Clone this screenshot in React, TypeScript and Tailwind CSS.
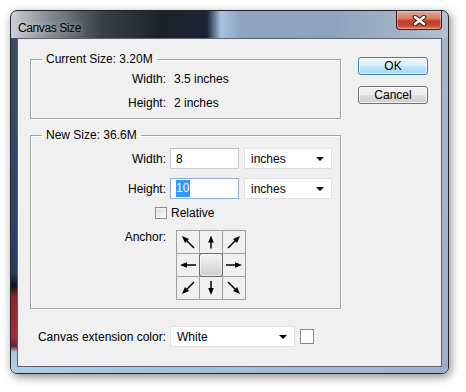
import React from 'react';

function CloseButton() {
  return (
    <div className="mr-[6px] w-[46px] h-[19px] rounded-b-[4px] border border-t-0 border-[#4a1810] bg-[linear-gradient(to_bottom,#e6a896_0%,#d8806a_40%,#c0402c_55%,#c6472e_80%,#e0785a_100%)] shadow-[inset_0_0_0_1px_rgba(255,255,255,0.35)] flex items-center justify-center">
      <svg width="15" height="11" viewBox="0 0 15 11">
        <path d="M3 2 L12 9 M12 2 L3 9" stroke="#3a1a14" strokeWidth="4.6" strokeLinecap="round" />
        <path d="M3 2 L12 9 M12 2 L3 9" stroke="#ffffff" strokeWidth="2.6" strokeLinecap="round" />
      </svg>
    </div>
  );
}

function Arrow({ rotate, len }: { rotate: number; len: number }) {
  const tip = 11 - len / 2;
  const tail = 11 + len / 2;
  return (
    <svg width="22" height="22" viewBox="0 0 22 22">
      <g transform={`rotate(${rotate} 11 11)`}>
        <line x1="11" y1={tail} x2="11" y2={tip + 5} stroke="#000" strokeWidth="1.5" />
        <polygon points={`11,${tip} 8.2,${tip + 7} 13.8,${tip + 7}`} fill="#000" />
      </g>
    </svg>
  );
}

function Select({ value, width }: { value: string; width: string }) {
  return (
    <div className={`${width} h-[21px] bg-white border border-[#e1e1e1] flex items-center justify-between pl-[6px] pr-[7px]`}>
      <span>{value}</span>
      <svg width="8" height="4" viewBox="0 0 8 4">
        <polygon points="0,0 8,0 4,4" fill="#000" />
      </svg>
    </div>
  );
}

const anchorArrows: { rotate: number; len: number }[] = [
  { rotate: -45, len: 17 },
  { rotate: 0, len: 13 },
  { rotate: 45, len: 17 },
  { rotate: -90, len: 16 },
  { rotate: 0, len: 0 },
  { rotate: 90, len: 16 },
  { rotate: -135, len: 17 },
  { rotate: 180, len: 14 },
  { rotate: 135, len: 17 },
];

export default function App() {
  return (
    <div className="w-[466px] h-[392px] bg-white pt-[10px] pl-[10px] font-['Liberation_Sans',Arial,sans-serif] text-[12px] leading-[14px] text-black">
      <div className="w-[439px] h-[364px] rounded-[7px] border border-[#20262e] overflow-hidden flex flex-col shadow-[2px_3px_10px_rgba(0,0,0,0.45)] bg-[linear-gradient(to_right,#cdd0d3_0px,#8a9097_35px,#3a4048_90px,#1c222c_150px,#1a2434_196px,#a6c4e2_210px,#8ea4bf_230px,#8da2bb_320px,#b2c0d0_437px)]">
        {/* Title bar */}
        <div className="h-[27px] flex items-start justify-between">
          <span className="pl-[7px] pt-[10px] tracking-[-0.4px] text-black [text-shadow:0_0_6px_rgba(255,255,255,0.6)]">
            Canvas Size
          </span>
          <CloseButton />
        </div>

        <div className="flex flex-1">
          <div className="w-[6px] bg-[linear-gradient(to_bottom,#3c4c62_0px,#2c4166_200px,#263a5c_236px,#0e1218_248px,#8e2030_258px,#a82a3a_300px,#6a2028_308px,#a9c6e2_314px,#b6cfe6_100%)]" />

          {/* Client area */}
          <div className="w-[425px] bg-[#f0f0f0] border border-[#59636f] pl-[12px] pt-[13px] flex flex-col">
            <div className="flex">
              <div className="w-[311px] flex flex-col">
                <fieldset className="border border-[#a3a3a3] shadow-[inset_1px_1px_0_#fff,1px_1px_0_#fff] pt-[1px] pb-[3px]">
                  <legend className="ml-[11px] px-[4px]">Current Size: 3.20M</legend>
                  <div className="flex items-center h-[24px]">
                    <span className="w-[135px] text-right">Width:</span>
                    <span className="ml-[8px]">3.5 inches</span>
                  </div>
                  <div className="flex items-center h-[24px]">
                    <span className="w-[135px] text-right">Height:</span>
                    <span className="ml-[8px]">2 inches</span>
                  </div>
                </fieldset>

                <fieldset className="mt-[9px] border border-[#a3a3a3] shadow-[inset_1px_1px_0_#fff,1px_1px_0_#fff] pt-[6px] pb-[8px]">
                  <legend className="ml-[11px] px-[4px]">New Size: 36.6M</legend>
                  <div className="flex items-center">
                    <span className="w-[135px] text-right">Width:</span>
                    <div className="ml-[4px] w-[69px] h-[21px] bg-white border border-[#cdcdcd] border-t-[#b5b5b5] flex items-center pl-[5px]">
                      8
                    </div>
                    <div className="ml-[5px]">
                      <Select value="inches" width="w-[88px]" />
                    </div>
                  </div>
                  <div className="flex items-center mt-[9px]">
                    <span className="w-[135px] text-right">Height:</span>
                    <div className="ml-[4px] w-[69px] h-[21px] bg-white border border-[#8eb0d6] flex items-center pl-[5px]">
                      <span className="bg-[#3399ff] text-white leading-[17px] border-r border-[#c07020]">10</span>
                    </div>
                    <div className="ml-[5px]">
                      <Select value="inches" width="w-[88px]" />
                    </div>
                  </div>
                  <div className="flex items-center mt-[8px] pl-[124px] h-[12px]">
                    <div className="w-[12px] h-[12px] border border-[#8e8f8f] bg-[linear-gradient(to_bottom_right,#dcdcdc,#fbfbfb)] shadow-[inset_0_0_0_1px_#f4f4f4]" />
                    <span className="ml-[4px]">Relative</span>
                  </div>
                  <div className="flex items-start mt-[11px]">
                    <span className="w-[135px] text-right">Anchor:</span>
                    <div className="ml-[10px] w-[70px] h-[70px] grid grid-cols-3 border-l border-t border-[#a0a0a0]">
                      {anchorArrows.map((a, i) =>
                        i === 4 ? (
                          <div key={i} className="border-r border-b border-[#a0a0a0] flex">
                            <div className="flex-1 -m-px rounded-[3px] border border-[#6e6e6e] bg-[linear-gradient(to_bottom,#f6f6f6,#cfcfcf)] shadow-[inset_0_0_0_1px_rgba(255,255,255,0.6)]" />
                          </div>
                        ) : (
                          <div key={i} className="border-r border-b border-[#a0a0a0] flex items-center justify-center">
                            <Arrow rotate={a.rotate} len={a.len} />
                          </div>
                        )
                      )}
                    </div>
                  </div>
                </fieldset>
              </div>

              {/* Buttons */}
              <div className="ml-[17px] mt-[5px] flex flex-col">
                <button className="w-[70px] h-[18px] rounded-[3px] border border-[#3c7fb1] bg-[linear-gradient(to_bottom,#eaf6fd_0%,#d9f0fc_50%,#bee6fd_51%,#a7d9f5_100%)] shadow-[inset_0_0_0_1px_rgba(255,255,255,0.7)] leading-[14px]">
                  OK
                </button>
                <button className="mt-[11px] w-[70px] h-[18px] rounded-[3px] border border-[#707070] bg-[linear-gradient(to_bottom,#f2f2f2_0%,#ebebeb_50%,#dddddd_51%,#cfcfcf_100%)] shadow-[inset_0_0_0_1px_rgba(255,255,255,0.7)] leading-[14px]">
                  Cancel
                </button>
              </div>
            </div>

            {/* Canvas extension color */}
            <div className="flex items-center mt-[17px]">
              <span className="w-[136px] text-right">Canvas extension color:</span>
              <div className="ml-[4px]">
                <Select value="White" width="w-[125px]" />
              </div>
              <div className="ml-[5px] w-[14px] h-[15px] bg-white border border-[#8a8a8a]" />
            </div>
          </div>

          <div className="w-[6px] bg-[linear-gradient(to_bottom,#a6b7cc,#9cb0c8)]" />
        </div>

        <div className="h-[6px] bg-[linear-gradient(to_right,#b4cde6_0%,#a8c0da_40%,#9fb2c8_100%)]" />
      </div>
    </div>
  );
}
